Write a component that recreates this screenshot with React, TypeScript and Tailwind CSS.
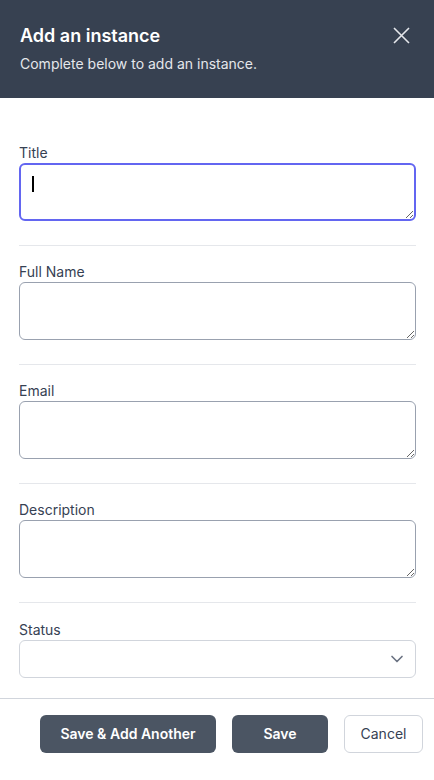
import { ChevronDown } from 'lucide-react';

const fields = ['Full Name', 'Email', 'Description'];

/**
 * Textarea field used in the instance form
 */
function AreaField({ label, focused }: { label: string; focused?: boolean }) {
  return (
    <div className="pt-4 pb-6 border-b border-gray-200">
      <label className="block text-sm leading-5 text-gray-700">{label}</label>
      <div className="relative">
        <textarea
          className={
            focused
              ? 'block w-full h-[58px] rounded-md border-2 border-[#6366f1] px-3 py-2 text-sm outline-none'
              : 'block w-full h-[58px] rounded-md border border-gray-400 px-3 py-2 text-sm outline-none'
          }
        />
        {/* fake caret */}
        {focused && <span className="absolute left-[13px] top-[13px] h-4 w-[2px] bg-black" />}
      </div>
    </div>
  );
}

export default function App() {
  return (
    <div className="flex h-[780px] flex-col bg-white font-['Inter',sans-serif]">
      {/* header */}
      <div className="flex items-start justify-between bg-[#374151] pl-5 pr-6 pt-[22px] pb-6">
        <div>
          <h2 className="text-lg leading-7 font-semibold text-white">Add an instance</h2>
          <p className="mt-1 text-sm leading-5 text-gray-200">Complete below to add an instance.</p>
        </div>
        <button className="mt-[5px] text-gray-200">
          <svg width="17" height="17" viewBox="0 0 17 17" fill="none" stroke="currentColor" strokeWidth="1.6">
            <path d="M1 1l15 15M16 1L1 16" />
          </svg>
        </button>
      </div>

      {/* form */}
      <div className="flex-1 pl-[19px] pr-[18px] pt-[29px]">
        <AreaField label="Title" focused />
        {fields.map((f) => (
          <AreaField key={f} label={f} />
        ))}
        <div className="pt-[17px] pb-5">
          <label className="block text-sm leading-5 text-gray-700">Status</label>
          <div className="relative">
            <select className="block h-[38px] w-full appearance-none rounded-md border border-gray-300 bg-white px-3 text-sm outline-none">
              <option></option>
            </select>
            <ChevronDown size={20} strokeWidth={2} className="absolute right-[9px] top-[9px] text-gray-500" />
          </div>
        </div>
      </div>

      {/* footer */}
      <div className="flex justify-end gap-4 border-t border-gray-300 pr-[11px] pt-4 pb-[27px]">
        <button className="h-[38px] w-[176px] rounded-md bg-[#4b5563] text-sm font-semibold text-white">
          Save &amp; Add Another
        </button>
        <button className="h-[38px] w-24 rounded-md bg-[#4b5563] text-sm font-semibold text-white">Save</button>
        <button className="h-[38px] w-[79px] rounded-md border border-gray-300 bg-white text-sm text-gray-700">
          Cancel
        </button>
      </div>
    </div>
  );
}
